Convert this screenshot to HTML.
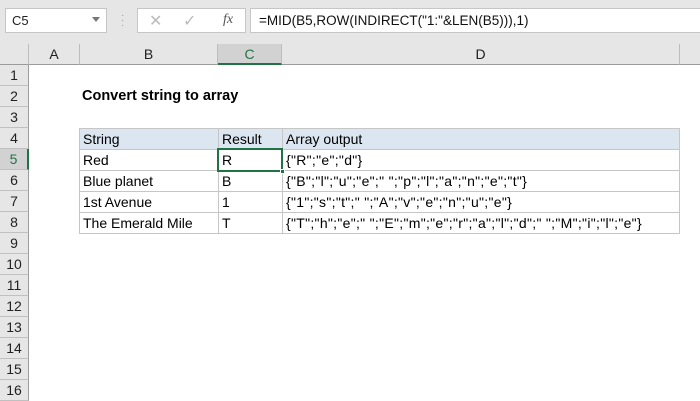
<!DOCTYPE html>
<html><head><style>
*{margin:0;padding:0;box-sizing:border-box}
body{width:700px;height:400px;overflow:hidden;background:#fff;font-family:"Liberation Sans",sans-serif;font-size:14px;position:relative}
.a{position:absolute}
.top{left:0;top:0;width:700px;height:44px;background:#e6e6e6}
.box{background:#fff;border:1px solid #c6c6c6}
.ch{top:44px;height:21px;background:#e6e6e6;border-right:1px solid #bdbdbd;border-bottom:1px solid #9b9b9b;text-align:center;line-height:20px;color:#222}
.rh{left:0;width:29px;height:21px;background:#e6e6e6;border-bottom:1px solid #c0c0c0;border-right:1px solid #9b9b9b;text-align:center;line-height:21px;color:#222}
.c{height:22px;border:1px solid #c6c6c6;padding-left:3px;line-height:20px;color:#000;white-space:nowrap;overflow:hidden}
.d{letter-spacing:0.3px}
</style></head><body>
<div class="a top"></div>
<div class="a box" style="left:5px;top:8px;width:102px;height:25px;padding:4px 6px;color:#222;font-size:13px">C5<span style="position:absolute;right:6px;top:8px;border:4px solid transparent;border-top:5px solid #777"></span></div>
<div class="a" style="left:121px;top:13px;color:#999;font-size:10px;line-height:5px">·<br>·<br>·</div>
<div class="a box" style="left:137px;top:8px;width:109px;height:25px;color:#bbb;font-size:16px"><span class="a" style="left:11px;top:2px">✕</span><span class="a" style="left:45px;top:2px">✓</span><span class="a" style="left:85px;top:3px;color:#555;font-style:italic;font-family:'Liberation Serif',serif;font-size:14px">fx</span></div>
<div class="a box" style="left:250px;top:8px;width:452px;height:25px;padding:4px 8px;color:#111;font-size:13.5px">=MID(B5,ROW(INDIRECT("1:"&amp;LEN(B5))),1)</div>
<div class="a ch" style="left:0;width:29px"></div>
<div class="a ch" style="left:29px;width:51px">A</div>
<div class="a ch" style="left:80px;width:138px">B</div>
<div class="a ch" style="left:218px;width:64px;background:#d2d2d2;border-bottom:2px solid #217346;color:#217346">C</div>
<div class="a ch" style="left:282px;width:398px">D</div>
<div class="a ch" style="left:680px;width:30px"></div>
<div class="a rh" style="top:65px">1</div><div class="a rh" style="top:86px">2</div><div class="a rh" style="top:107px">3</div><div class="a rh" style="top:128px">4</div>
<div class="a rh" style="top:149px;background:#d2d2d2;color:#217346;border-right:2px solid #217346">5</div>
<div class="a rh" style="top:170px">6</div><div class="a rh" style="top:191px">7</div><div class="a rh" style="top:212px">8</div><div class="a rh" style="top:233px">9</div><div class="a rh" style="top:254px">10</div><div class="a rh" style="top:275px">11</div><div class="a rh" style="top:296px">12</div><div class="a rh" style="top:317px">13</div><div class="a rh" style="top:338px">14</div><div class="a rh" style="top:359px">15</div><div class="a rh" style="top:380px">16</div>
<div class="a" style="left:82px;top:88px;font-weight:bold;font-size:14.5px">Convert string to array</div>
<div class="a c" style="left:79px;top:128px;width:140px;background:#dce6f1">String</div>
<div class="a c" style="left:218px;top:128px;width:65px;background:#dce6f1">Result</div>
<div class="a c" style="left:282px;top:128px;width:398px;background:#dce6f1">Array output</div>
<div class="a c" style="left:79px;top:149px;width:140px">Red</div>
<div class="a c" style="left:218px;top:149px;width:65px">R</div>
<div class="a c d" style="left:282px;top:149px;width:398px">{"R";"e";"d"}</div>
<div class="a c" style="left:79px;top:170px;width:140px">Blue planet</div>
<div class="a c" style="left:218px;top:170px;width:65px">B</div>
<div class="a c d" style="left:282px;top:170px;width:398px">{"B";"l";"u";"e";" ";"p";"l";"a";"n";"e";"t"}</div>
<div class="a c" style="left:79px;top:191px;width:140px">1st Avenue</div>
<div class="a c" style="left:218px;top:191px;width:65px">1</div>
<div class="a c d" style="left:282px;top:191px;width:398px">{"1";"s";"t";" ";"A";"v";"e";"n";"u";"e"}</div>
<div class="a c" style="left:79px;top:212px;width:140px">The Emerald Mile</div>
<div class="a c" style="left:218px;top:212px;width:65px">T</div>
<div class="a c d" style="left:282px;top:212px;width:398px">{"T";"h";"e";" ";"E";"m";"e";"r";"a";"l";"d";" ";"M";"i";"l";"e"}</div>
<div class="a" style="left:217px;top:148px;width:66px;height:24px;border:2px solid #217346"></div>
<div class="a" style="left:280px;top:169px;width:5px;height:5px;background:#217346;border:1px solid #fff"></div>
</body></html>
